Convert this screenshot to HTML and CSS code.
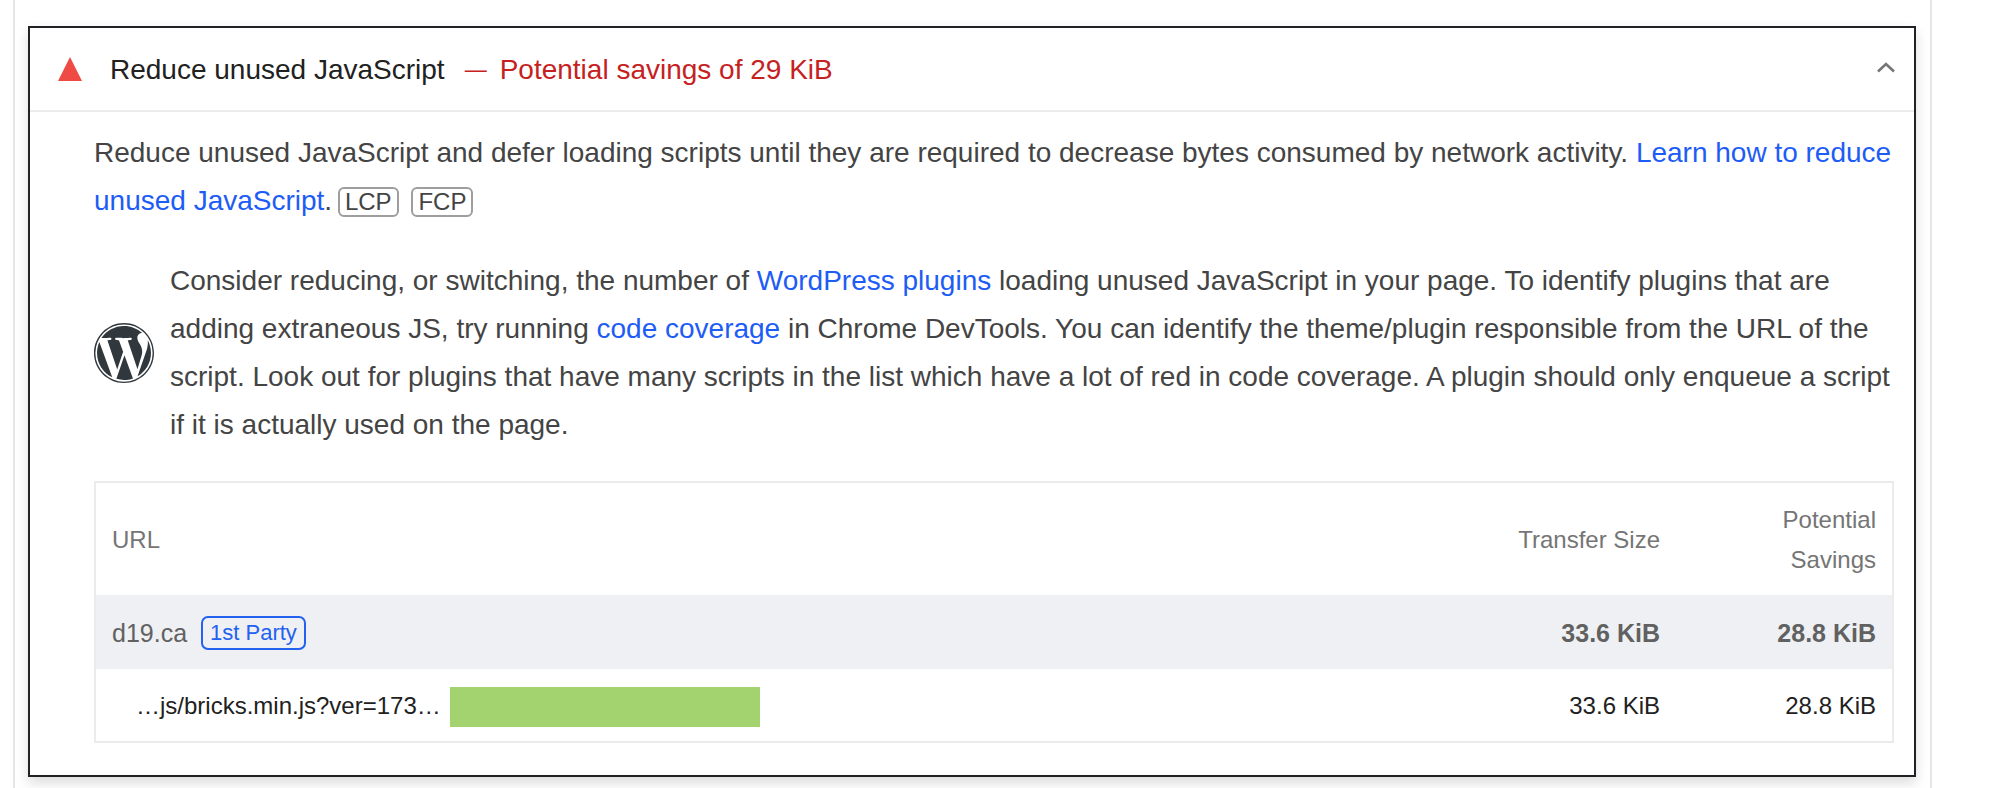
FILE: index.html
```html
<!DOCTYPE html>
<html lang="en">
<head>
<meta charset="utf-8">
<title>Reduce unused JavaScript</title>
<link rel="stylesheet" href="styles.css">
</head>
<body>
<div class="frame">
  <section class="audit">
    <header class="audit-head">
      <svg class="tri" viewBox="0 0 24 24" aria-hidden="true"><polygon points="12,0 24,24 0,24"/></svg>
      <span class="audit-title">Reduce unused JavaScript</span>
      <span class="audit-sep">—</span>
      <span class="audit-value">Potential savings of 29 KiB</span>
      <svg class="chev" viewBox="0 0 18 10" aria-hidden="true"><path d="M1 9.5 9 2 17 9.5"/></svg>
    </header>
    <div class="audit-body">
      <p class="desc">Reduce unused JavaScript and defer loading scripts until they are required to decrease bytes consumed by network activity. <a href="#">Learn how to reduce unused JavaScript</a>. <span class="metric">LCP</span> <span class="metric">FCP</span></p>
      <div class="stack">
        <svg class="wp" viewBox="0 0 24 24" aria-hidden="true"><path fill-rule="evenodd" d="M21.469 6.825c.84 1.537 1.318 3.3 1.318 5.175 0 3.979-2.156 7.456-5.363 9.325l3.295-9.527c.615-1.54.82-2.771.82-3.864 0-.405-.026-.78-.07-1.11m-7.981.105c.647-.03 1.232-.105 1.232-.105.582-.075.514-.93-.067-.899 0 0-1.755.135-2.88.135-1.064 0-2.85-.15-2.85-.15-.585-.03-.661.855-.075.885 0 0 .54.061 1.125.09l1.68 4.605-2.37 7.08L5.354 6.9c.649-.03 1.234-.1 1.234-.1.585-.075.516-.93-.065-.896 0 0-1.746.138-2.874.138-.2 0-.438-.008-.69-.015C4.911 3.15 8.235 1.215 12 1.215c2.809 0 5.365 1.072 7.286 2.833-.046-.003-.091-.009-.141-.009-1.06 0-1.812.923-1.812 1.914 0 .89.513 1.643 1.06 2.531.411.72.89 1.643.89 2.977 0 .915-.354 1.994-.821 3.479l-1.075 3.585-3.9-11.61.001.014zM12 22.784c-1.059 0-2.081-.153-3.048-.437l3.237-9.406 3.315 9.087c.024.053.05.101.078.149-1.12.393-2.325.609-3.582.609M1.211 12c0-1.564.336-3.05.935-4.39L7.29 21.709C3.694 19.96 1.212 16.271 1.211 12M12 0C5.385 0 0 5.385 0 12s5.385 12 12 12 12-5.385 12-12S18.615 0 12 0M12 .55a11.45 11.45 0 1 0 0 22.9a11.45 11.45 0 1 0 0-22.9z"/></svg>
        <p class="stack-text">Consider reducing, or switching, the number of <a href="#">WordPress plugins</a> loading unused JavaScript in your page. To identify plugins that are adding extraneous JS, try running <a href="#">code coverage</a> in Chrome DevTools. You can identify the theme/plugin responsible from the URL of the script. Look out for plugins that have many scripts in the list which have a lot of red in code coverage. A plugin should only enqueue a script if it is actually used on the page.</p>
      </div>
      <div class="table">
        <div class="row row-head">
          <div class="cell">URL</div>
          <div class="cell num">Transfer Size</div>
          <div class="cell num">Potential Savings</div>
        </div>
        <div class="row row-group">
          <div class="cell url-group"><span class="host">d19.ca</span><span class="party">1st Party</span></div>
          <div class="cell num">33.6 KiB</div>
          <div class="cell num">28.8 KiB</div>
        </div>
        <div class="row row-sub">
          <div class="cell url-sub"><span>…js/bricks.min.js?ver=173…</span><span class="bar"></span></div>
          <div class="cell num">33.6 KiB</div>
          <div class="cell num">28.8 KiB</div>
        </div>
      </div>
    </div>
  </section>
</div>
</body>
</html>
```
FILE: styles.css
```css
* { box-sizing: border-box; }
html, body { margin: 0; padding: 0; background: #fff; }
body {
  font-family: "Liberation Sans", Arial, sans-serif;
  color: #444;
  height: 788px;
  overflow: hidden;
}
.frame {
  margin-left: 13px;
  width: 1919px;
  height: 788px;
  border-left: 2px solid #e6e6e6;
  border-right: 2px solid #e6e6e6;
  padding: 26px 14px 0 13px;
}
.audit {
  border: 2.5px solid #202124;
  box-shadow: 0 6px 12px rgba(0, 0, 0, 0.14);
  background: #fff;
  height: 751px;
}
.audit-head {
  display: flex;
  align-items: center;
  height: 84px;
  padding-left: 28px;
  border-bottom: 2px solid #ebebeb;
  font-size: 28px;
  position: relative;
}
.tri { width: 24px; height: 24px; fill: #ef4a43; flex: none; margin-right: 28px; }
.audit-title, .audit-sep, .audit-value { padding-top: 2px; }
.audit-title { color: #212121; }
.audit-sep { color: #c5221f; font-size: 22px; margin-left: 20px; margin-right: 13px; }
.audit-value { color: #c5221f; }
.chev {
  position: absolute;
  right: 19px;
  top: 34px;
  width: 18px;
  height: 10px;
  fill: none;
  stroke: #757575;
  stroke-width: 2.6;
  overflow: visible;
}
.audit-body { padding: 17px 20px 0 64px; font-size: 28px; line-height: 48px; }
.desc { margin: 0; }
a { color: #1d5cf5; text-decoration: none; }
.metric {
  display: inline-block;
  border: 2px solid #9e9e9e;
  border-radius: 6px;
  padding: 0 5px;
  font-size: 24px;
  line-height: 26px;
  margin-right: 5px;
}
.metric:first-of-type { margin-left: -2px; }
.stack { display: flex; align-items: center; gap: 16px; margin-top: 32px; }
.wp { width: 60px; height: 60px; flex: none; fill: #30373d; }
.stack-text { margin: 0; }
.table {
  margin-top: 32px;
  border: 2px solid #ebebeb;
  font-size: 24px;
  line-height: 40px;
  height: 262px;
}
.row { display: grid; grid-template-columns: 1fr 214px 216px; align-items: center; padding-top: 2px; }
.cell { padding: 0 16px; }
.num { text-align: right; }
.row-head { height: 112px; color: #757575; }
.row-group { height: 74px; background: #eff0f3; color: #616161; }
.row-group .num { font-weight: 700; font-size: 25px; }
.host { font-size: 25px; }
.row-sub { height: 72px; color: #212121; }
.url-group, .url-sub { display: flex; align-items: center; }
.party {
  border: 2px solid #2361f0;
  border-radius: 7px;
  color: #2361f0;
  padding: 0 7px;
  margin-left: 14px;
  font-size: 22px;
  line-height: 30px;
}
.url-sub { padding-left: 40px; }
.bar { width: 310px; height: 40px; background: #a3d36f; margin-left: 9px; margin-top: 2px; }
```
